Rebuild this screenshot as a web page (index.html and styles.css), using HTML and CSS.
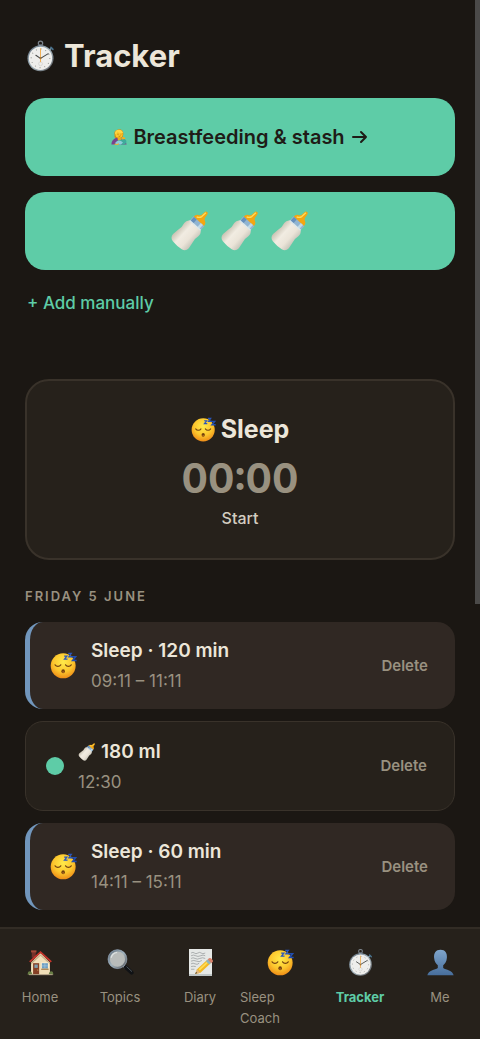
FILE: index.html
```html
<!DOCTYPE html>
<html lang="en">
<head>
<meta charset="utf-8">
<meta name="viewport" content="width=device-width, initial-scale=1">
<title>Tracker</title>
<link rel="stylesheet" href="styles.css">
</head>
<body>
<svg class="sprite" aria-hidden="true">
  <defs>
    <linearGradient id="metal" x1="0" y1="0" x2="1" y2="1"><stop offset="0" stop-color="#5d6c7b"/><stop offset=".5" stop-color="#a2b3bc"/><stop offset="1" stop-color="#55565a"/></linearGradient>
    <radialGradient id="skin" cx=".5" cy=".35" r=".65"><stop offset="0" stop-color="#ffea4a"/><stop offset=".6" stop-color="#fcc62d"/><stop offset="1" stop-color="#ee8d18"/></radialGradient>
    <linearGradient id="milk" x1="0" y1="0" x2="1" y2="0"><stop offset="0" stop-color="#c9c2b2"/><stop offset=".35" stop-color="#f1ece2"/><stop offset=".7" stop-color="#ebe4d8"/><stop offset="1" stop-color="#c8c5ba"/></linearGradient>
    <linearGradient id="bust" x1="0" y1="0" x2="0" y2="1"><stop offset="0" stop-color="#7fa5cb"/><stop offset="1" stop-color="#476e9c"/></linearGradient>
  </defs>
  <symbol id="stopwatch" viewBox="0 0 40 40">
    <circle cx="20" cy="3.500" r="2.800" fill="none" stroke="#7b838b" stroke-width="1.600"/>
    <path d="M17 5h6v5h-6z" fill="#606973"/><path d="M18 6h2v3h-2z" fill="#aeb5ba"/>
    <path d="M31 13l3-3" stroke="#7893a4" stroke-width="2"/><path d="M33.500 9l2.500 2.500" stroke="#49718b" stroke-width="2.200" stroke-linecap="round"/>
    <circle cx="20" cy="23" r="16.800" fill="url(#metal)"/><circle cx="20" cy="23" r="15" fill="#eeeeec"/>
    <circle cx="20" cy="23" r="12" fill="none" stroke="#858783" stroke-width="1.400" stroke-dasharray="1 5.280"/>
    <circle cx="20" cy="30" r="2.500" fill="none" stroke="#c8c8c6" stroke-width=".7"/>
    <path d="M20 10v18" stroke="#efab4c" stroke-width="1.200"/>
    <path d="M14 19l6 4 10-6" fill="none" stroke="#454746" stroke-width="1.300" stroke-linecap="round"/><circle cx="20" cy="23" r="1.300" fill="#a47539"/>
  </symbol>
  <symbol id="sleepy" viewBox="0 0 40 40">
    <circle cx="19.500" cy="20.500" r="18.500" fill="url(#skin)"/>
    <path d="M7.500 19c2 3 6.500 3 8.500 0M23 19c2 3 6.500 3 8.500 0" fill="none" stroke="#744311" stroke-width="1.700" stroke-linecap="round"/>
    <ellipse cx="19.500" cy="28.500" rx="2.600" ry="3" fill="#71400e"/><ellipse cx="19.500" cy="29.800" rx="1.500" ry="1.200" fill="#b46c1e"/>
    <path d="M21 6h4l-3.500 4.500H26" fill="none" stroke="#2956bd" stroke-width="1.900"/>
    <path d="M27 2h4.500L28 7h5" fill="none" stroke="#2956bd" stroke-width="2"/>
    <path d="M32 7h6l-4.500 5.500h6" fill="none" stroke="#214dae" stroke-width="2.300"/>
  </symbol>
  <symbol id="bottle" viewBox="0 0 40 40">
    <g transform="translate(1 -1) rotate(42 20 20) scale(.92) translate(1.700 2)">
      <path d="M18-4q0-2.500 2-2.500t2 2.500l.5 4q1 2 3.500 3 1.500 1.500 1.500 4.500h-15q0-3 1.500-4.500 2.500-1 3.500-3z" fill="#f3a612"/>
      <path d="M19.500-5l-.5 6q-1 3-4 4" fill="none" stroke="#ffdc5a" stroke-width="1.500"/>
      <path d="M12 7h16v7H12z" fill="#91b4d0"/><path d="M13 7h4v7h-4z" fill="#6690bd"/><path d="M23 7h3v7h-3z" fill="#c0d9e7"/>
      <path d="M12 13h16q3 2 2.500 6-1.500 5 0 10l1 7q0 5-5 6-6.500 1-13 0-5-1-5-6l1-7q1.500-5 0-10-.5-4 2.500-6z" fill="url(#milk)"/>
      <path d="M12 13h16" stroke="#dbe7eb" stroke-width="1.500"/>
    </g>
  </symbol>
  <symbol id="nursing" viewBox="0 0 40 40">
    <path d="M9 15Q6 3 18 1q13-1 13 12 0 7-6 10H12q-5-2-3-8z" fill="#d78a0c"/>
    <circle cx="20" cy="13" r="9" fill="#ffc72b"/><path d="M10 13Q9 2 20 2q8 0 10 8-11 0-14-4-1 6-6 7z" fill="#ffd746"/>
    <path d="M16 13h3m5 0h2m-7 5q3 1 5-1" stroke="#87500d" stroke-width="1.500" fill="none"/>
    <path d="M1 39q0-12 12-17l10 1q14 2 16 16z" fill="#79438d"/>
    <path d="M16 21h8l2 7-8 3z" fill="#efac1a"/><circle cx="31" cy="25" r="5" fill="#f0af20"/>
    <path d="M13 36q0-8 11-9l10-2q6 3 4 10-3 5-13 4z" fill="#3eab9b"/><path d="M11 34q7-8 14-4l5 4-5 5H11z" fill="#8fcbd8"/>
    <path d="M9 38q6 2 11-1" stroke="#f3b51f" stroke-width="2.500" fill="none"/>
  </symbol>
  <symbol id="house" viewBox="0 0 40 40">
    <path d="M7 3h6v10H7z" fill="#75322b"/><path d="M6 2h8v3H6z" fill="#a54938"/>
    <path d="M6 20L20 6l14 14v18H6z" fill="#f1dfb9"/><path d="M6 20L20 8l14 12v3L20 10 6 23z" fill="#c5ad85"/>
    <path d="M4 19L20 4.500 36 19" fill="none" stroke="#c8352b" stroke-width="2.500"/>
    <path d="M9 21h9v17H9z" fill="#854026"/><path d="M11 23h5v5h-5z" fill="#7e9dae"/><circle cx="16" cy="31" r=".8" fill="#e9bb62"/>
    <path d="M21 20h11v10H21z" fill="#fff3d5"/><path d="M22 21h9v8h-9z" fill="#6c9fc3"/><path d="M26.500 21v8M22 25h9" stroke="#a8c8da"/>
    <path d="M21 30h11" stroke="#ac8450" stroke-width="2"/><path d="M1 38q0-5 3-5 3 0 4 5zm31 0q1-5 4-5t3 5z" fill="#687d45"/>
    <path d="M3 38h35" stroke="#b4a48a" stroke-width="1.500"/>
  </symbol>
  <symbol id="magnifier" viewBox="0 0 40 40">
    <path d="M24 24l4 4" stroke="#929ba1" stroke-width="4"/><path d="M28 27l8.500 8" stroke="#101215" stroke-width="6" stroke-linecap="round"/>
    <path d="M29 26l8 7.500" stroke="#5c646a" stroke-width="1.200"/>
    <circle cx="15.500" cy="15" r="12.700" fill="#b9bcba" stroke="url(#metal)" stroke-width="3"/>
    <path d="M6 13q2-7 9-8" fill="none" stroke="#dce1e2" stroke-width="2"/><circle cx="15.500" cy="15" r="14" fill="none" stroke="#9fb1c5" stroke-width=".8"/>
  </symbol>
  <symbol id="memo" viewBox="0 0 40 40">
    <path d="M3 0h34v40H3z" fill="#e5e8e6"/><path d="M3 37h34v3H3z" fill="#bec5c5"/>
    <path d="M6 6q3-2 5 0t5 0 5 0 6 0M6 10q4-2 7 0t7 0 7 0M6 14q3-2 6 0t7 0 8 0M6 18q4-2 8 0t8-1M6 22q3-2 6 0t6-1M6 26q3-1 7 0M6 30h5" fill="none" stroke="#8d9294" stroke-width="1"/>
    <path d="M12 37l3-7L30 16l5 5-15 14z" fill="#f2b723"/><path d="M17 30l14-13 2 2-14 13z" fill="#ffdc52"/>
    <path d="M12 37l3-7 5 5z" fill="#dfb57b"/><path d="M12 37l1.500-3 1.500 1.500z" fill="#38332f"/>
    <path d="M28 18l3-3 5 5-3 3z" fill="#8bb5be"/><path d="M31 15q3-3 6 0t0 5l-1 1-5-5z" fill="#d9836c"/>
  </symbol>
  <symbol id="person" viewBox="0 0 40 40">
    <path d="M20 1c7 0 10 5 9.500 12-.5 6-3 9-5.500 11v4c4 3 14 3 15.500 11H.5C2 31 12 31 16 28v-4c-2.500-2-5-5-5.500-11C10 6 13 1 20 1z" fill="url(#bust)"/>
  </symbol>
</svg>

<div class="scroll-thumb" aria-hidden="true"></div>

<main class="page">
  <h1 class="title"><svg class="icon-title"><use href="#stopwatch"/></svg>Tracker</h1>
  <div class="actions">
    <button class="action" type="button"><svg class="icon-nursing"><use href="#nursing"/></svg><span>Breastfeeding &amp; stash</span>
      <svg class="arrow" viewBox="0 0 18 18"><path d="M2 9h13M10 4l5 5-5 5"/></svg></button>
    <button class="action bottles" type="button" aria-label="Log a bottle">
      <svg class="icon-bottle"><use href="#bottle"/></svg><svg class="icon-bottle"><use href="#bottle"/></svg><svg class="icon-bottle"><use href="#bottle"/></svg>
    </button>
  </div>
  <button class="add" type="button">+ Add manually</button>

  <button class="timer" type="button">
    <span class="timer-name"><svg class="icon-timer"><use href="#sleepy"/></svg>Sleep</span>
    <span class="timer-value">00:00</span>
    <span class="timer-hint">Start</span>
  </button>

  <section>
    <h2 class="day">FRIDAY 5 JUNE</h2>
    <ul class="entries">
      <li class="entry sleep">
        <svg class="icon-entry"><use href="#sleepy"/></svg>
        <div class="entry-text"><strong class="entry-name">Sleep · 120 min</strong><span class="entry-time">09:11 – 11:11</span></div>
        <button class="delete" type="button">Delete</button>
      </li>
      <li class="entry feed">
        <span class="dot"></span>
        <div class="entry-text"><strong class="entry-name"><svg class="icon-inline"><use href="#bottle"/></svg>180 ml</strong><span class="entry-time">12:30</span></div>
        <button class="delete" type="button">Delete</button>
      </li>
      <li class="entry sleep">
        <svg class="icon-entry"><use href="#sleepy"/></svg>
        <div class="entry-text"><strong class="entry-name">Sleep · 60 min</strong><span class="entry-time">14:11 – 15:11</span></div>
        <button class="delete" type="button">Delete</button>
      </li>
    </ul>
  </section>
</main>

<nav class="tabs">
  <a class="tab" href="#home"><svg class="icon-tab"><use href="#house"/></svg><span>Home</span></a>
  <a class="tab" href="#topics"><svg class="icon-tab"><use href="#magnifier"/></svg><span>Topics</span></a>
  <a class="tab" href="#diary"><svg class="icon-tab"><use href="#memo"/></svg><span>Diary</span></a>
  <a class="tab" href="#coach"><svg class="icon-tab"><use href="#sleepy"/></svg><span class="tab-wrap">Sleep<br>Coach</span></a>
  <a class="tab active" href="#tracker" aria-current="page"><svg class="icon-tab"><use href="#stopwatch"/></svg><span>Tracker</span></a>
  <a class="tab" href="#me"><svg class="icon-tab"><use href="#person"/></svg><span>Me</span></a>
</nav>
</body>
</html>
```
FILE: styles.css
```css
:root {
  --bg: #1b1713;
  --surface: #26211b;
  --sleep-surface: #302823;
  --line: #39322a;
  --text: #ece6d9;
  --muted: #999180;
  --accent: #5ecca7;
}

* { box-sizing: border-box; }

body {
  margin: 0;
  min-height: 100vh;
  display: flex;
  flex-direction: column;
  background: var(--bg);
  color: var(--text);
  font-family: Inter, "Liberation Sans", sans-serif;
  font-size: 16px;
  line-height: 24px;
}

button {
  font: inherit;
  color: inherit;
  border: 0;
  background: none;
  padding: 0;
  cursor: pointer;
}

svg { flex: none; }

.sprite { position: absolute; width: 0; height: 0; }

.scroll-thumb {
  position: absolute;
  top: 0;
  right: 0;
  width: 5px;
  height: 604px;
  background: #4b4a49;
}

.page {
  flex: 1;
  display: flex;
  flex-direction: column;
  padding: 32px 25px 16px;
}

.title {
  display: flex;
  align-items: center;
  gap: 8px;
  margin: 0 0 18px;
  font-size: 31px;
  line-height: 48px;
  font-weight: 700;
}

.icon-title { width: 31px; height: 32px; }

.actions { display: grid; gap: 16px; }

.action {
  display: flex;
  align-items: center;
  justify-content: center;
  gap: 6px;
  height: 78px;
  border-radius: 20px;
  background: var(--accent);
  color: #1f1c17;
  font-size: 20px;
  font-weight: 600;
}

.bottles { gap: 10px; }

.arrow {
  width: 18px;
  height: 18px;
  fill: none;
  stroke: currentColor;
  stroke-width: 2;
  stroke-linecap: round;
  stroke-linejoin: round;
}

.icon-nursing { width: 16px; height: 18px; }
.icon-inline { width: 18px; height: 18px; }
.icon-bottle { width: 40px; height: 40px; }

.add {
  align-self: flex-start;
  margin: 21px 0 64px;
  padding: 0 2px;
  color: var(--accent);
  font-size: 17px;
  font-weight: 500;
}

.timer {
  display: flex;
  flex-direction: column;
  align-items: center;
  padding: 29px 24px 28px;
  border: 2px solid var(--line);
  border-radius: 24px;
  background: var(--surface);
}

.timer-name {
  display: flex;
  align-items: center;
  gap: 5px;
  font-size: 25px;
  line-height: 38px;
  font-weight: 700;
}

.icon-timer { width: 25px; height: 25px; }

.timer-value {
  margin: 8px 0 6px;
  color: var(--muted);
  font-size: 41px;
  line-height: 44px;
  font-weight: 700;
  font-variant-numeric: tabular-nums;
}

.timer-hint { color: #d3cdc0; font-weight: 500; }

.day {
  margin: 26px 0 16px;
  color: var(--muted);
  font-size: 13px;
  line-height: 20px;
  font-weight: 600;
  letter-spacing: 2px;
}

.entries {
  display: grid;
  gap: 12px;
  margin: 0;
  padding: 0;
  list-style: none;
}

.entry {
  display: flex;
  align-items: center;
  gap: 14px;
  padding: 15px 20px;
  border-radius: 18px;
}

.sleep {
  border-left: 5px solid #7196bc;
  background: var(--sleep-surface);
}

.feed {
  min-height: 90px;
  border: 1px solid var(--line);
  background: var(--surface);
}

.icon-entry { width: 27px; height: 27px; }

.dot {
  width: 18px;
  height: 18px;
  border-radius: 50%;
  background: var(--accent);
}

.entry-text {
  flex: 1;
  display: flex;
  flex-direction: column;
  gap: 3px;
}

.entry-name {
  display: flex;
  align-items: center;
  gap: 5px;
  font-size: 19px;
  line-height: 28px;
  font-weight: 600;
}

.entry-time {
  color: var(--muted);
  font-size: 17px;
  line-height: 26px;
}

.delete {
  padding: 0 7px;
  color: var(--muted);
  font-size: 15px;
  font-weight: 600;
}

.tabs {
  display: grid;
  grid-template-columns: repeat(6, 1fr);
  padding: 20px 0 10px;
  border-top: 2px solid #322c25;
  background: var(--surface);
}

.tab {
  display: flex;
  flex-direction: column;
  align-items: center;
  gap: 11px;
  color: var(--muted);
  font-size: 13px;
  line-height: 21px;
  text-decoration: none;
}

.tab-wrap { width: 100%; }

.active { color: var(--accent); font-weight: 700; }

.icon-tab { width: 27px; height: 27px; }
```
